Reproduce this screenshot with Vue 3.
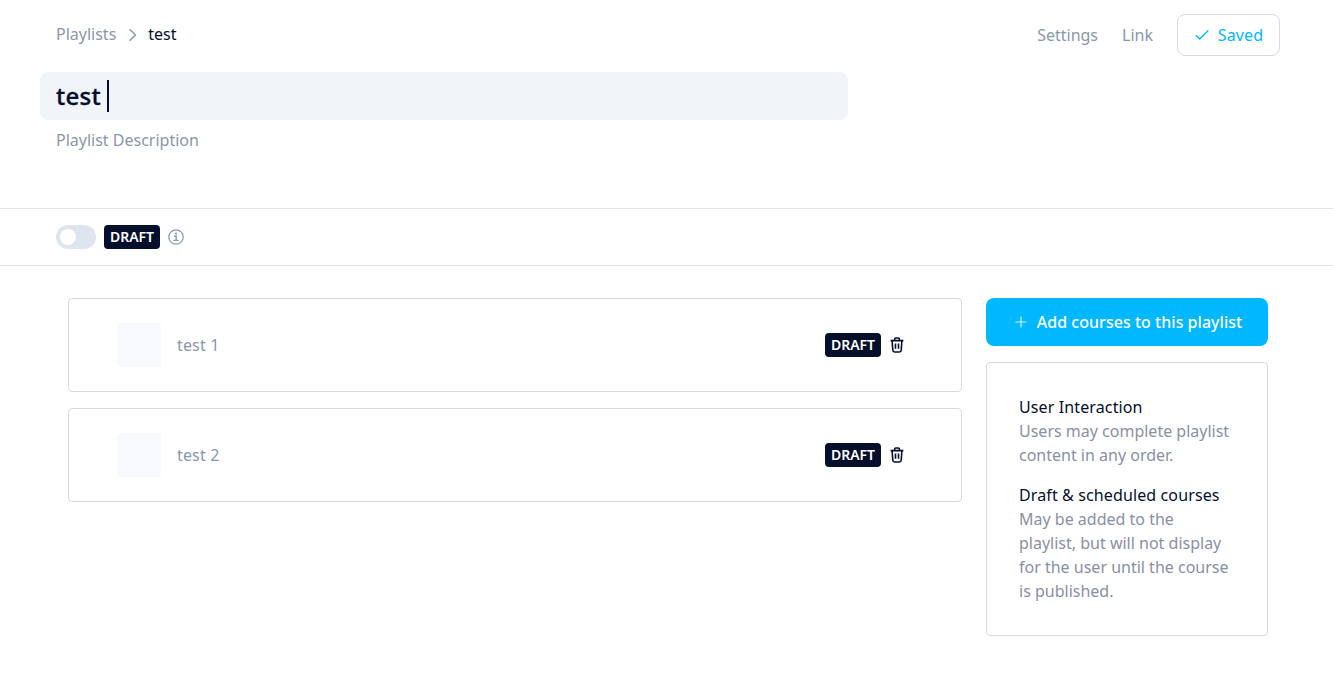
<script setup>
const items = [{ id: 1, name: 'test 1' }, { id: 2, name: 'test 2' }]
</script>

<template>
  <div class="page">
    <header class="head">
      <div class="head-top">
        <nav class="crumbs">
          <span class="crumb-link">Playlists</span>
          <svg class="chev" width="10" height="14" viewBox="0 0 10 14"><path d="M1.500 1.200 7.500 7l-6 5.800" fill="none" stroke="#8a97ab" stroke-width="1.400"/></svg>
          <span class="crumb-cur">test</span>
        </nav>
        <div class="actions">
          <span class="act">Settings</span>
          <span class="act">Link</span>
          <div class="saved">
            <svg width="14" height="12" viewBox="0 0 14 12"><path d="M.8 6.200 4.800 10 13.200 1.400" fill="none" stroke="#00b8ff" stroke-width="1.400"/></svg>
            <span class="saved-label">Saved</span>
          </div>
        </div>
      </div>
      <div class="title-box"><span class="title">test</span><i class="caret"></i></div>
      <div class="desc">Playlist Description</div>
    </header>

    <div class="status">
      <div class="toggle"><i class="knob"></i></div>
      <span class="badge">DRAFT</span>
      <svg class="info" width="16" height="16" viewBox="0 0 16 16">
        <circle cx="8" cy="8" r="7.200" fill="none" stroke="#8a97ab" stroke-width="1.300"/>
        <circle cx="8" cy="4.600" r="1.100" fill="#8a97ab"/>
        <path d="M6 7.300H8.200V11M5.500 11.400H10.500" fill="none" stroke="#8a97ab" stroke-width="1.400"/>
      </svg>
    </div>

    <main class="body">
      <section class="list">
        <article v-for="item in items" :key="item.id" class="row">
          <div class="thumb"></div>
          <span class="name">{{ item.name }}</span>
          <span class="badge">DRAFT</span>
          <svg class="trash" width="14" height="16" viewBox="0 0 14 16">
            <path d="M.6 3.600H13.400M4.600 3.300V2.200Q4.600 1 5.800 1H8.200Q9.400 1 9.400 2.200V3.300M2.100 3.700 2.800 13.300Q2.900 15 4.600 15H9.400Q11.100 15 11.200 13.300L11.900 3.700M5.500 6.500V11.800M8.500 6.500V11.800" fill="none" stroke="#050f2c" stroke-width="1.600"/>
          </svg>
        </article>
      </section>
      <aside class="side">
        <button class="add" type="button">
          <svg width="12" height="12" viewBox="0 0 12 12"><path d="M6 .5V11.500M.5 6H11.500" stroke="#cfefff" stroke-width="1.200" fill="none"/></svg>
          <span>Add courses to this playlist</span>
        </button>
        <div class="panel">
          <div class="note">
            <h4>User Interaction</h4>
            <p>Users may complete playlist content in any order.</p>
          </div>
          <div class="note">
            <h4>Draft &amp; scheduled courses</h4>
            <p>May be added to the playlist, but will not display for the user until the course is published.</p>
          </div>
        </div>
      </aside>
    </main>
  </div>
</template>

<style>
html, body { margin: 0; background: #fff; }
</style>

<style scoped>
.page {
  font-family: "Noto Sans", "Open Sans", sans-serif;
  font-size: 16px;
  line-height: 24px;
  color: #050f2c;
  min-height: 679px;
}
.head {
  height: 208px;
  box-sizing: border-box;
  padding: 14px 53px 0 40px;
}
.head-top {
  display: flex;
  justify-content: space-between;
  align-items: flex-start;
  height: 58px;
}
.crumbs {
  display: flex;
  align-items: center;
  height: 40px;
  padding-left: 16px;
}
.crumb-link { color: #8a97ab; }
.chev { margin: 1px 10px 0 12px; }
.crumb-cur { color: #050f2c; }
.actions {
  display: flex;
  align-items: center;
  height: 42px;
}
.act { color: #8a97ab; margin-right: 24px; }
.saved {
  display: flex;
  align-items: center;
  gap: 9px;
  box-sizing: border-box;
  width: 103px;
  height: 42px;
  justify-content: center;
  padding-left: 1px;
  border: 1px solid #d3dae6;
  border-radius: 8px;
  color: #00b8ff;
}
.saved-label { letter-spacing: 0.1px; }
.title-box {
  display: flex;
  align-items: center;
  width: 808px;
  height: 48px;
  box-sizing: border-box;
  padding-left: 16px;
  background: #f1f5fa;
  border-radius: 8px;
}
.title {
  font-size: 24px;
  line-height: 32px;
  font-weight: 500;
  letter-spacing: 0.25px;
  -webkit-text-stroke: 0.35px #050f2c;
  color: #050f2c;
}
.caret {
  display: block;
  width: 2px;
  height: 32px;
  margin-left: 6px;
  background: #050f2c;
}
.desc {
  padding-left: 16px;
  margin-top: 8px;
  color: #8a97ab;
}
.status {
  display: flex;
  align-items: center;
  height: 56px;
  padding-left: 56px;
  border-top: 1px solid #dfe5ee;
  border-bottom: 1px solid #dfe5ee;
}
.toggle {
  width: 40px;
  height: 24px;
  border-radius: 12px;
  background: #dfe5ee;
  display: flex;
  align-items: center;
  padding-left: 4px;
  box-sizing: border-box;
  margin-right: 8px;
}
.knob {
  display: block;
  width: 16px;
  height: 16px;
  border-radius: 50%;
  background: #fff;
}
.info { margin-left: 8px; }
.badge {
  display: block;
  width: 56px;
  height: 24px;
  box-sizing: border-box;
  text-align: center;
  background: #050f2c;
  color: #fff;
  border-radius: 4px;
  font-size: 14px;
  line-height: 24px;
  font-weight: 600;
}
.body {
  display: flex;
  align-items: flex-start;
  gap: 24px;
  padding: 32px 65px 0 68px;
}
.list {
  width: 894px;
  display: flex;
  flex-direction: column;
  gap: 16px;
}
.row {
  display: flex;
  align-items: center;
  height: 94px;
  box-sizing: border-box;
  padding: 0 57px 0 48px;
  border: 1px solid #d3dae6;
  border-radius: 4px;
}
.thumb {
  width: 44px;
  height: 44px;
  border-radius: 4px;
  background: #f8f9fd;
  margin-right: 16px;
}
.name { flex: 1; color: #8a97ab; letter-spacing: 0.15px; }
.trash { margin-left: 9px; }
.side { width: 282px; display: flex; flex-direction: column; gap: 16px; }
.add {
  display: flex;
  align-items: center;
  justify-content: center;
  gap: 10px;
  height: 48px;
  border: 0;
  border-radius: 8px;
  padding: 0 0 0 3px;
  background: #00b8ff;
  color: #fff;
  font: 500 16px/24px "Noto Sans", sans-serif;
  letter-spacing: 0.03px;
}
.panel {
  height: 274px;
  box-sizing: border-box;
  padding: 32px 32px 0;
  border: 1px solid #d3dae6;
  border-radius: 4px;
}
.note + .note { margin-top: 16px; }
.note h4 { margin: 0; font-size: 16px; line-height: 24px; font-weight: 400; letter-spacing: 0.12px; color: #050f2c; }
.note p { margin: 0; color: #8a8fa3; }
</style>
